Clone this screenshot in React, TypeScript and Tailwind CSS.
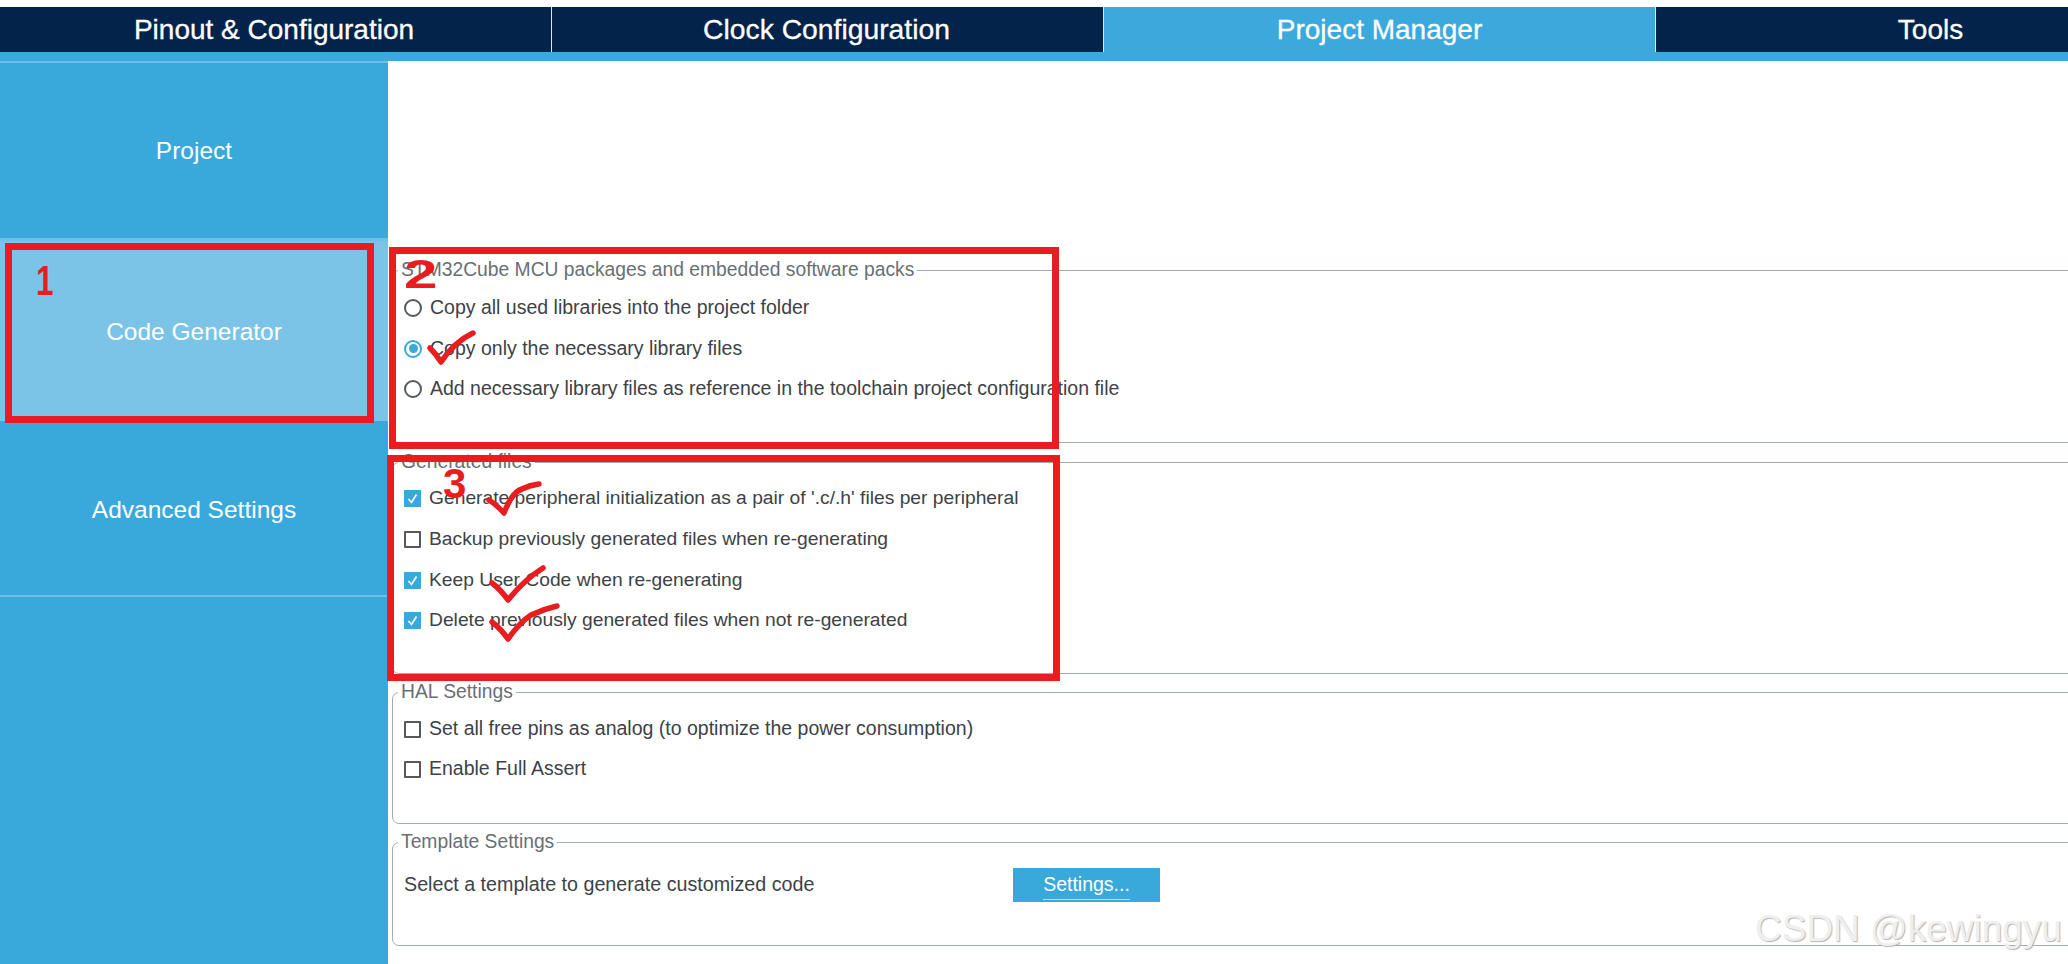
import React from "react";

function Box({ on }: { on?: boolean }) {
  if (on) {
    return (
      <span className="flex h-[17px] w-[17px] shrink-0 items-center justify-center bg-[#39a9dc]">
        <svg width="13" height="13" viewBox="0 0 13 13" fill="none" stroke="white" strokeWidth="1.6">
          <path d="M2.5 7 L5.5 10.5 L10.5 2.5" />
        </svg>
      </span>
    );
  }
  return <span className="h-[17px] w-[17px] shrink-0 rounded-[1px] border-2 border-[#55595e] bg-white" />;
}

function Dot({ on }: { on?: boolean }) {
  if (on) {
    return (
      <span className="flex h-[18px] w-[18px] shrink-0 items-center justify-center rounded-full border-2 border-[#39a9dc] bg-white">
        <span className="h-[9px] w-[9px] rounded-full bg-[#39a9dc]" />
      </span>
    );
  }
  return <span className="h-[18px] w-[18px] shrink-0 rounded-full border-2 border-[#55595e] bg-white" />;
}

function Row({ children, label, h }: { children: React.ReactNode; label: string; h: string }) {
  return (
    <div className={`flex items-center gap-[8px] whitespace-nowrap ${h}`}>
      {children}
      <span>{label}</span>
    </div>
  );
}

function Group({ title, size, children }: { title: string; size: string; children: React.ReactNode }) {
  return (
    <fieldset className={`ml-[4px] w-[1700px] shrink-0 rounded-[7px] border border-[#a3abb3] pl-[11px] ${size}`}>
      <legend className="-ml-[6px] px-[3px] text-[19.3px] text-[#696f75] leading-[20px]">{title}</legend>
      {children}
    </fieldset>
  );
}

function SideItem({ label, size }: { label: string; size: string }) {
  return <div className={`flex items-center justify-center text-[24.5px] text-white ${size}`}>{label}</div>;
}

export default function App() {
  return (
    <div className="relative h-[964px] w-[2068px] overflow-hidden bg-white pt-[7px] font-['Liberation_Sans',Arial,sans-serif] text-[#3d4247]">
      {/* top tabs */}
      <div className="flex h-[45px] bg-[#03234b] text-[28px] text-white [-webkit-text-stroke:0.3px_white]">
        <div className="flex w-[552px] shrink-0 items-center justify-center border-r border-[#dfe6ec] pr-[3px]">Pinout &amp; Configuration</div>
        <div className="flex w-[552px] shrink-0 items-center justify-center border-r border-[#dfe6ec] pr-[2px] text-[28.3px]">Clock Configuration</div>
        <div className="flex w-[552px] shrink-0 items-center justify-center border-r border-[#dfe6ec] bg-[#3ba9dc]">Project Manager</div>
        <div className="flex w-[552px] shrink-0 items-center justify-center pr-[3px]">Tools</div>
      </div>
      <div className="h-[9px] bg-[#3ba9dc]" />

      <div className="flex h-[903px]">
        {/* left menu */}
        <div className="flex w-[388px] shrink-0 flex-col bg-[#39a9dc]">
          <SideItem label="Project" size="h-[177px] border-t-2 border-[#6cbfe6] pt-[2px]" />
          <div className="h-[3px] bg-[#6cbfe6]" />
          <SideItem label="Code Generator" size="h-[180px] bg-[#7bc4e8] pt-[2px]" />
          <SideItem label="Advanced Settings" size="h-[176px] border-b-2 border-[#6cbfe6] pt-[5px]" />
        </div>

        {/* settings */}
        <div className="flex min-w-0 flex-1 flex-col gap-2 overflow-hidden pt-[199px] text-[19.5px]">
          <Group title="STM32Cube MCU packages and embedded software packs" size="h-[183px] pt-[8px]">
            <Row label="Copy all used libraries into the project folder" h="h-[40px]"><Dot /></Row>
            <Row label="Copy only the necessary library files" h="h-[41px]"><Dot on /></Row>
            <Row label="Add necessary library files as reference in the toolchain project configuration file" h="h-[40px]"><Dot /></Row>
          </Group>
          <div className="-mt-[7px]" />
          <Group title="Generated files" size="h-[222px] pt-[6px] text-[19.25px]">
            <Row label="Generate peripheral initialization as a pair of '.c/.h' files per peripheral" h="h-[41px]"><Box on /></Row>
            <Row label="Backup previously generated files when re-generating" h="h-[41px]"><Box /></Row>
            <Row label="Keep User Code when re-generating" h="h-[40px]"><Box on /></Row>
            <Row label="Delete previously generated files when not re-generated" h="h-[41px]"><Box on /></Row>
          </Group>
          <Group title="HAL Settings" size="h-[142px] pt-[7px]">
            <Row label="Set all free pins as analog (to optimize the power consumption)" h="h-[40px]"><Box /></Row>
            <Row label="Enable Full Assert" h="h-[40px]"><Box /></Row>
          </Group>
          <Group title="Template Settings" size="h-[114px] pt-[16px]">
            <div className="flex h-[34px] items-center whitespace-nowrap">
              <span className="w-[609px] text-[19.7px]">Select a template to generate customized code</span>
              <button className="flex h-[34px] w-[147px] items-center justify-center bg-[#39a9dc] text-white">
                <span className="border-b border-[#b5dff3]">Settings...</span>
              </button>
            </div>
          </Group>
        </div>
      </div>

      {/* red annotations */}
      <div className="absolute left-[5px] top-[243px] h-[180px] w-[369px] border-[7px] border-[#e91c1f]" />
      <div className="absolute left-[389px] top-[247px] h-[202px] w-[670px] border-[7px] border-[#e91c1f]" />
      <div className="absolute left-[387px] top-[455px] h-[226px] w-[673px] border-[7px] border-[#e91c1f]" />
      <span className="absolute left-[33px] top-[258px] scale-x-75 text-[42px] leading-[46px] font-bold text-[#e91c1f]">1</span>
      <span className="absolute left-[404px] top-[252px] origin-left scale-x-150 text-[40px] leading-[44px] font-bold text-[#e91c1f]">2</span>
      <span className="absolute left-[443px] top-[461px] text-[42px] leading-[46px] font-bold text-[#e91c1f]">3</span>
      <svg className="absolute left-0 top-0" width="2068" height="964" fill="none" stroke="#e91c1f" strokeWidth="5.5" strokeLinecap="round" strokeLinejoin="round">
        <path d="M430 348 Q436 354 441 362 Q454 342 473 333" />
        <path d="M489 500 Q497 505 504 513 Q512 492 522 489 Q530 485 539 484" />
        <path d="M492 583 Q501 590 508 600 Q524 580 543 568" />
        <path d="M492 622 Q501 629 508 639 Q520 622 531 615 Q544 609 557 606" />
      </svg>

      {/* watermark */}
      <span className="absolute left-[1755px] top-[908px] whitespace-nowrap text-[37px] leading-[42px] text-[#efefef] [text-shadow:1px_1px_1px_#b5b5b5]">
        CSDN @kewingyu
      </span>
    </div>
  );
}
